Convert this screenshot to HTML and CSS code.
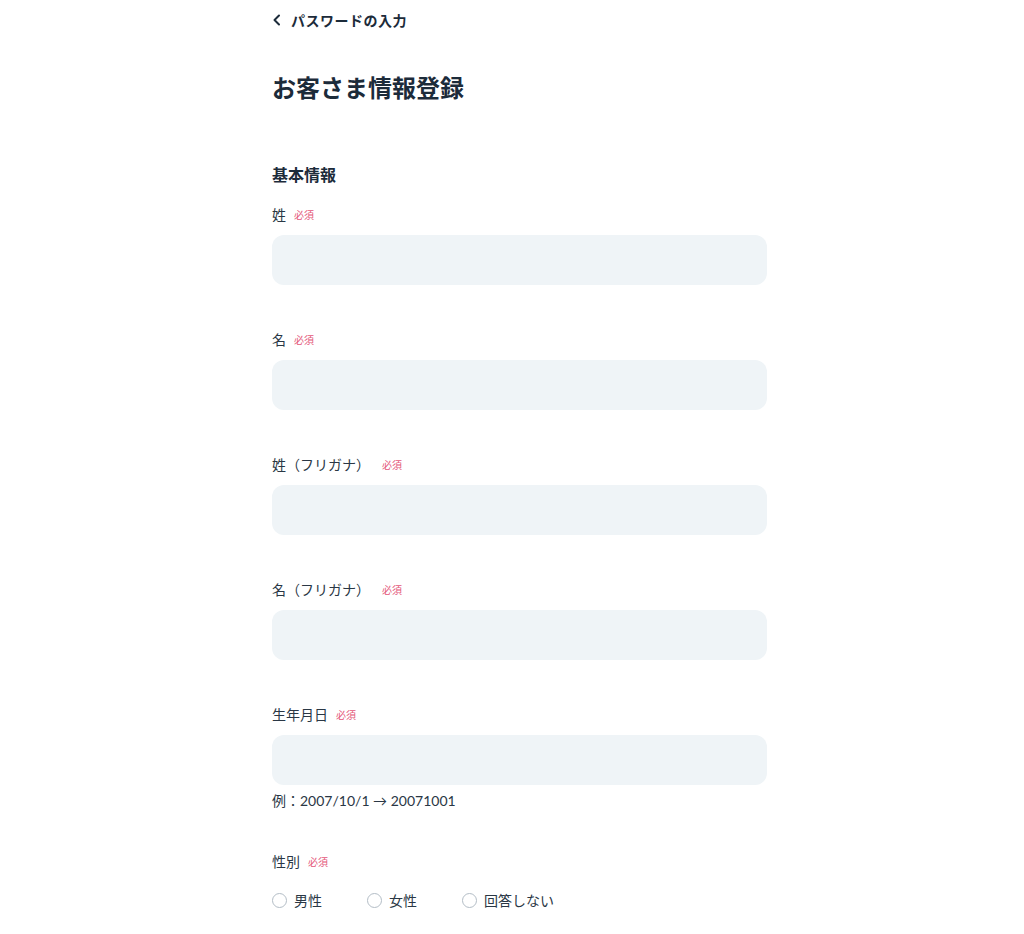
FILE: index.html
```html
<!DOCTYPE html>
<html lang="ja">
<head>
  <meta charset="UTF-8">
  <meta name="viewport" content="width=device-width, initial-scale=1.0">
  <title>お客さま情報登録</title>
  <link rel="stylesheet" href="styles.css">
</head>
<body>
  <div class="page">
    <a class="back-link" href="#">
      <svg class="back-icon" width="10" height="12" viewBox="0 0 10 12">
        <path d="M7 1.5 L2.5 6 L7 10.5" fill="none" stroke="#1c2b3a" stroke-width="2" stroke-linecap="round" stroke-linejoin="round"/>
      </svg>
      パスワードの入力
    </a>

    <h1 class="page-title">お客さま情報登録</h1>

    <h2 class="section-title">基本情報</h2>

    <div class="field">
      <label class="field-label">姓<span class="required">必須</span></label>
      <input type="text" class="text-input">
    </div>

    <div class="field">
      <label class="field-label">名<span class="required">必須</span></label>
      <input type="text" class="text-input">
    </div>

    <div class="field">
      <label class="field-label">姓（フリガナ）<span class="required required-wide">必須</span></label>
      <input type="text" class="text-input">
    </div>

    <div class="field">
      <label class="field-label">名（フリガナ）<span class="required required-wide">必須</span></label>
      <input type="text" class="text-input">
    </div>

    <div class="field field-birthday">
      <label class="field-label">生年月日<span class="required">必須</span></label>
      <input type="text" class="text-input">
      <p class="hint">例：2007/10/1 → 20071001</p>
    </div>

    <div class="field field-gender">
      <label class="field-label">性別<span class="required">必須</span></label>
      <div class="radio-group">
        <label class="radio-option"><span class="radio-circle"></span>男性</label>
        <label class="radio-option"><span class="radio-circle"></span>女性</label>
        <label class="radio-option"><span class="radio-circle"></span>回答しない</label>
      </div>
    </div>
  </div>
</body>
</html>
```

FILE: styles.css
```css
body {
  margin: 0;
  padding: 0;
  background-color: #fff;
  color: #23313f;
  font-family: Lato, "Noto Sans CJK JP", sans-serif;
}
.page {
  width: 495px;
  margin-left: 272px;
  padding-top: 10px;
}
.back-link {
  display: flex;
  align-items: center;
  gap: 9px;
  height: 20px;
  font-size: 14px;
  font-weight: 700;
  letter-spacing: 0.5px;
  color: #1c2b3a;
  text-decoration: none;
}
.back-icon {
  display: block;
}
.page-title {
  margin: 40px 0 0;
  font-size: 24px;
  line-height: 36px;
  font-weight: 700;
  color: #1c2b3a;
}
.section-title {
  margin: 57px 0 0;
  font-size: 16px;
  line-height: 24px;
  font-weight: 700;
  color: #1c2b3a;
}
.field {
  margin-top: 18px;
}
.field + .field {
  margin-top: 45px;
}
.field-label {
  display: flex;
  align-items: center;
  height: 20px;
  font-size: 14px;
  line-height: 20px;
  color: #2a3745;
}
.required {
  margin-left: 8px;
  font-size: 10px;
  color: #e4577a;
}
.required-wide {
  margin-left: 12px;
}
.text-input {
  display: block;
  box-sizing: border-box;
  width: 100%;
  height: 50px;
  margin-top: 10px;
  padding: 0 16px;
  border: none;
  border-radius: 12px;
  background-color: #eff4f7;
  font-size: 16px;
}
.hint {
  margin: 6px 0 0;
  font-size: 14px;
  line-height: 20px;
  color: #2a3745;
}
.field.field-gender {
  margin-top: 41px;
}
.radio-group {
  display: flex;
  margin-top: 18px;
}
.radio-option {
  display: flex;
  align-items: center;
  height: 20px;
  margin-right: 45px;
  font-size: 14px;
  color: #2a3745;
}
.radio-circle {
  box-sizing: border-box;
  width: 15px;
  height: 15px;
  margin-right: 7px;
  border: 1.5px solid #b3bdc6;
  border-radius: 50%;
}
```
